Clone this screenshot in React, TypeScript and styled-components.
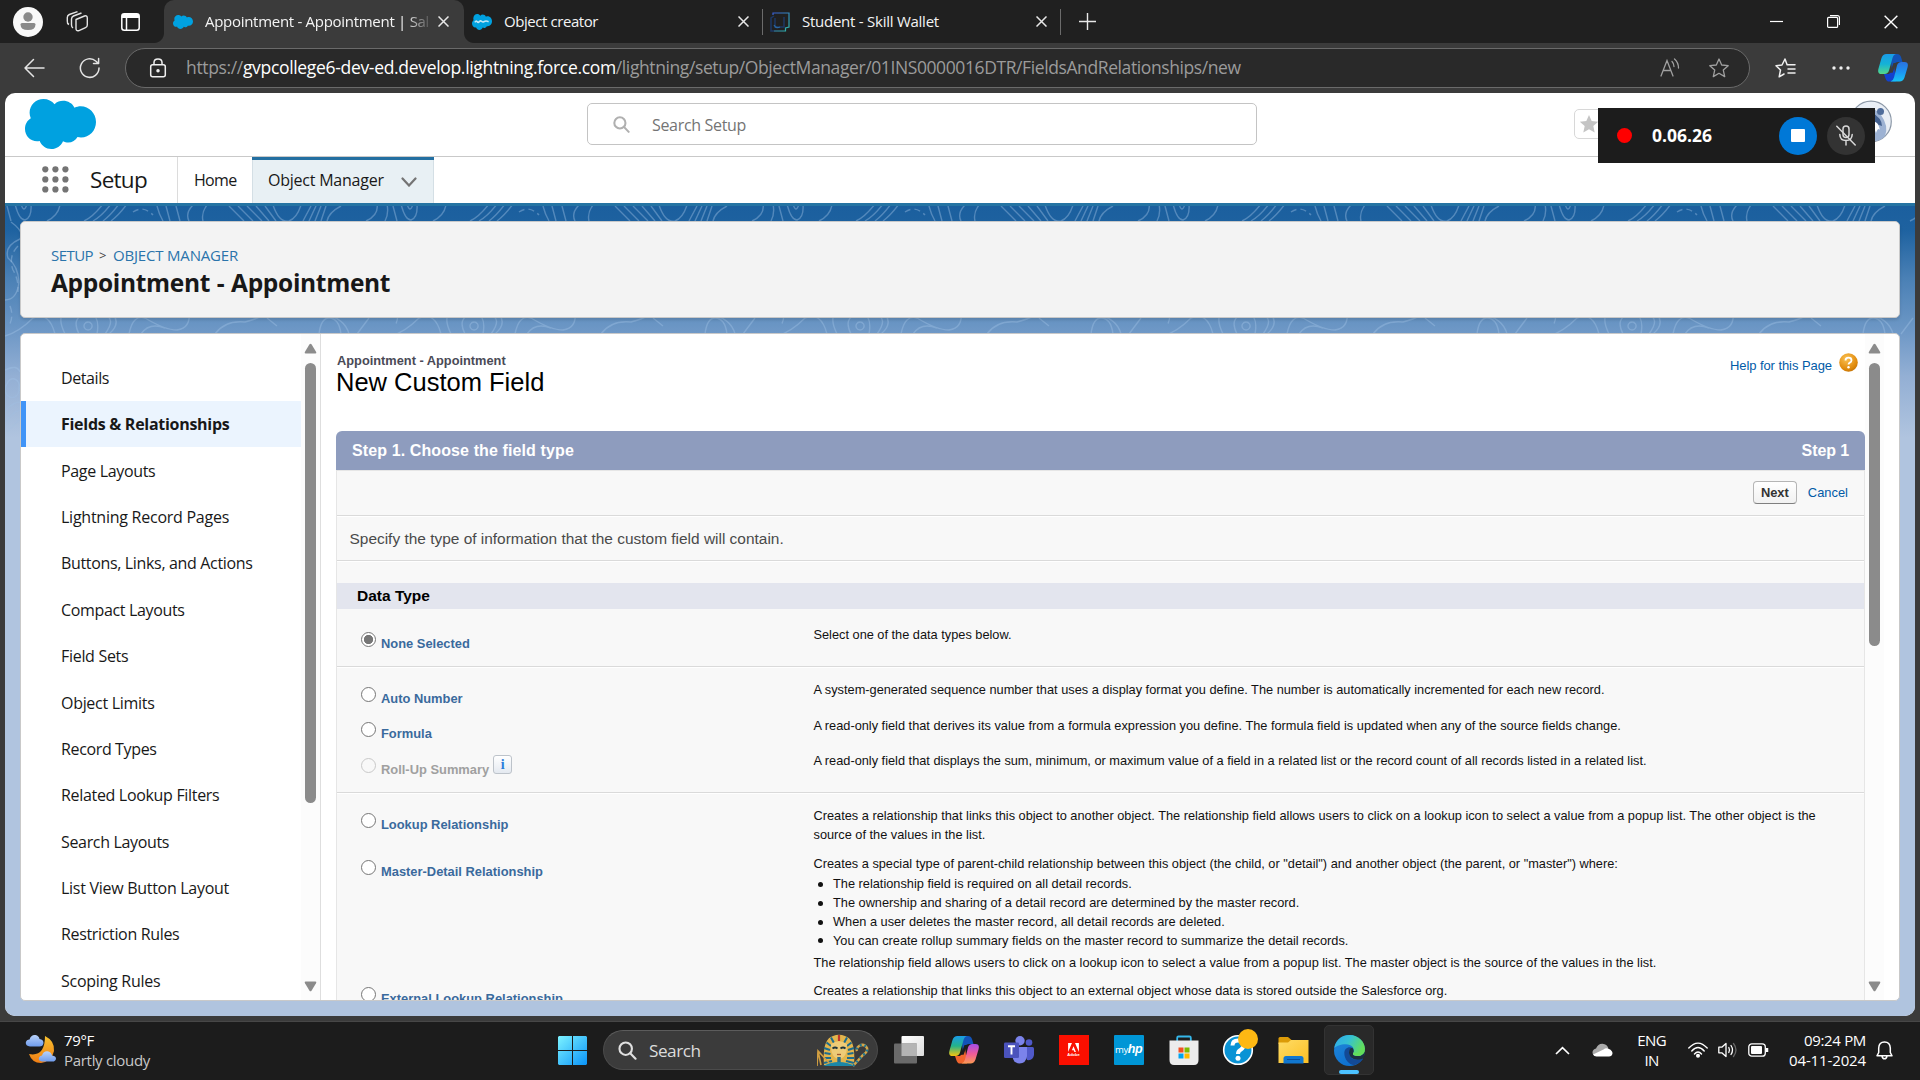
import React from 'react';
import styled, { createGlobalStyle, css } from 'styled-components';

const UI = '"Segoe UI", "Open Sans", "Noto Sans", sans-serif';
const CLASSIC = 'Arial, "Liberation Sans", sans-serif';

const GlobalStyle = createGlobalStyle`
  * { box-sizing: border-box; }
  body { margin: 0; background: #3b3b3b; font-family: ${UI}; overflow: hidden; }
  ul { margin: 0; padding: 0; list-style: none; }
  svg { display: block; flex: none; }
`;

const Screen = styled.div`
  width: 1920px;
  height: 1080px;
  display: flex;
  flex-direction: column;
  background: #3b3b3b;
  overflow: hidden;
`;

/* ---------- Browser chrome ---------- */

const TabStrip = styled.div`
  height: 43px;
  flex: none;
  display: flex;
  align-items: center;
  background: #202020;
  padding-left: 13px;
`;

const Avatar = styled.div`
  width: 30px;
  height: 30px;
  border-radius: 50%;
  background: #f9f9f9;
  display: grid;
  place-items: center;
  margin-right: 23px;
`;

const StripIcon = styled.div<{ $gap: number }>`
  margin-right: ${p => p.$gap}px;
`;

const Tab = styled.div<{ $width: number; $active?: boolean; $divider?: boolean; $pad: number }>`
  position: relative;
  width: ${p => p.$width}px;
  height: ${p => (p.$active ? 43 : 26)}px;
  display: flex;
  align-items: center;
  padding: 0 ${p => (p.$active ? 15 : 13)}px 0 ${p => p.$pad}px;
  ${p => p.$divider && css`border-right: 1px solid #6b6b6b;`}
  ${p =>
    p.$active &&
    css`
      background: #3b3b3b;
      border-radius: 10px 10px 0 0;
      &::before,
      &::after {
        content: '';
        position: absolute;
        bottom: 0;
        width: 10px;
        height: 10px;
      }
      &::before {
        left: -10px;
        background: radial-gradient(circle at 0 0, #202020 9.5px, #3b3b3b 10.5px);
      }
      &::after {
        right: -10px;
        background: radial-gradient(circle at 100% 0, #202020 9.5px, #3b3b3b 10.5px);
      }
    `}
`;

const TabTitle = styled.div<{ $ls: number; $fade?: boolean }>`
  flex: 1;
  min-width: 0;
  margin-left: 12px;
  overflow: hidden;
  white-space: nowrap;
  font-size: 15px;
  line-height: 22px;
  padding-bottom: 2px;
  letter-spacing: ${p => p.$ls}px;
  color: #f4f4f4;
  ${p => p.$fade && css`mask-image: linear-gradient(to right, #000 200px, transparent 228px);`}
`;

const NewTab = styled.div`
  margin-left: 18px;
`;

const WindowControls = styled.div`
  margin-left: auto;
  display: flex;
  align-items: center;
  gap: 44px;
  padding-right: 22px;
`;

const Toolbar = styled.div`
  height: 50px;
  flex: none;
  display: flex;
  align-items: center;
  padding: 0 12px 0 23px;
  background: #3b3b3b;
`;

const ReloadSlot = styled.div`
  margin-left: 34px;
`;

const AddressBar = styled.div`
  width: 1625px;
  height: 40px;
  flex: none;
  margin: 0 25px 0 24px;
  border: 1px solid #6a6a6a;
  border-radius: 20px;
  background: #292929;
  display: flex;
  align-items: center;
  padding: 0 20px 0 23px;
`;

const Url = styled.div`
  flex: 1;
  margin: 0 0 2px 19px;
  display: flex;
  font-size: 17.5px;
  line-height: 26px;
  color: #9b9b9b;
  white-space: nowrap;
`;

const UrlPart = styled.span<{ $ls: number; $host?: boolean }>`
  letter-spacing: ${p => p.$ls}px;
  ${p => p.$host && css`color: #fff;`}
`;

const AddressIcons = styled.div`
  display: flex;
  gap: 29px;
`;

const MoreDots = styled.svg`
  margin: 0 28px 0 36px;
`;

/* ---------- Salesforce page ---------- */

const Page = styled.div`
  width: 1910px;
  height: 923px;
  margin: 0 0 0 5px;
  flex: none;
  border-radius: 10px;
  overflow: hidden;
  background: #fff;
  display: flex;
  flex-direction: column;
`;

const GlobalHeader = styled.header`
  height: 64px;
  flex: none;
  display: flex;
  align-items: flex-start;
  border-bottom: 1px solid #c9c9c9;
  padding: 5px 23px 0 20px;
`;

const LogoSlot = styled.div`
  padding-top: 1px;
`;

const SearchBox = styled.div`
  width: 670px;
  height: 42px;
  margin: 5px 0 0 491px;
  border: 1px solid #c4c4c4;
  border-radius: 5px;
  display: flex;
  align-items: center;
  gap: 22px;
  padding-left: 25px;
  font-size: 16px;
  letter-spacing: -0.32px;
  color: #747474;
`;

const SearchHint = styled.span`
  padding-top: 2px;
`;

const FavoriteButton = styled.div`
  width: 40px;
  height: 30px;
  margin: 11px 0 0 317px;
  border: 1px solid #d8d8d8;
  border-radius: 5px;
  display: flex;
  align-items: center;
  padding-left: 4px;
`;

const UserAvatar = styled.div`
  margin: 2px 0 0 auto;
`;

const RecorderBar = styled.div`
  position: absolute;
  left: 1598px;
  top: 108px;
  width: 277px;
  height: 55px;
  background: #1c1c1c;
  display: flex;
  align-items: center;
  padding: 0 10px 0 19px;
`;

const RecordDot = styled.div`
  width: 15px;
  height: 15px;
  border-radius: 50%;
  background: #f00;
`;

const RecordTime = styled.div`
  flex: 1;
  margin-left: 20px;
  padding-bottom: 2px;
  font-size: 17.5px;
  font-weight: 700;
  color: #fff;
`;

const RoundButton = styled.div<{ $color: string }>`
  width: 38px;
  height: 38px;
  border-radius: 50%;
  margin-left: 10px;
  background: ${p => p.$color};
  display: grid;
  place-items: center;
`;

const StopSquare = styled.div`
  width: 14px;
  height: 13px;
  border-radius: 1px;
  background: #fff;
`;

const NavBar = styled.nav`
  height: 46px;
  flex: none;
  display: flex;
  padding-left: 37px;
`;

const WaffleSlot = styled.div`
  width: 48px;
  padding-top: 9px;
`;

const AppName = styled.div`
  width: 88px;
  border-right: 1px solid #dcdcdc;
  font-size: 22.5px;
  line-height: 46px;
  letter-spacing: -0.71px;
  color: #181818;
`;

const NavItem = styled.div<{ $active?: boolean; $ls: number; $width: number }>`
  width: ${p => p.$width}px;
  padding: 0 17px 0 16px;
  font-size: 16px;
  line-height: 47px;
  letter-spacing: ${p => p.$ls}px;
  color: #181818;
  display: flex;
  justify-content: space-between;
  ${p =>
    p.$active &&
    css`
      background: #e8f0f4;
      box-shadow: inset 0 3px 0 #236fa1, inset 1px 0 0 #d4dfe5, inset -1px 0 0 #d4dfe5;
    `}
  svg { margin-top: 20px; }
`;

const Canvas = styled.main`
  position: relative;
  flex: 1;
  padding: 16px 15px 16px;
  border-top: 3px solid #2574a3;
  background: linear-gradient(to bottom, #1b5f9e 0, #1e62a0 24px, #4a80b5 72px, #6e98c6 125px, #93afd4 170px, #b0c4df 232px);
  display: flex;
  flex-direction: column;
`;

const Pattern = styled.svg`
  position: absolute;
  left: 0;
  top: 0;
`;

const PageHeader = styled.section`
  position: relative;
  height: 97px;
  margin-top: -1px;
  flex: none;
  border: 1px solid #c9c9c9;
  border-radius: 5px;
  background: #f3f3f3;
  box-shadow: 0 2px 3px rgba(0, 0, 0, 0.12);
  padding: 22px 30px 0;
`;

const Crumbs = styled.div`
  display: flex;
  font-size: 15px;
  line-height: 23px;
  color: #2a74ab;
  white-space: pre;
`;

const Crumb = styled.span<{ $ls: number; $width: number; $plain?: boolean }>`
  width: ${p => p.$width}px;
  letter-spacing: ${p => p.$ls}px;
  ${p => p.$plain && css`color: #444; font-size: 13px;`}
`;

const ObjectTitle = styled.h1`
  margin: 0;
  font-size: 24.5px;
  line-height: 32px;
  letter-spacing: -0.31px;
  word-spacing: 0.6px;
  font-weight: 700;
  color: #181818;
`;

const Workspace = styled.section`
  position: relative;
  height: 668px;
  margin-top: 15px;
  flex: none;
  border: 1px solid #c9c9c9;
  border-radius: 5px;
  background: #fff;
  display: flex;
  overflow: hidden;
`;

const SideMenu = styled.ul`
  width: 280px;
  flex: none;
  padding-top: 21px;
`;

const SideItem = styled.li<{ $selected?: boolean; $ls: number }>`
  height: 46.36px;
  padding-left: 40px;
  font-size: 16px;
  line-height: 47px;
  letter-spacing: ${p => p.$ls}px;
  color: #181818;
  white-space: nowrap;
  ${p =>
    p.$selected &&
    css`
      font-weight: 700;
      background: #ebf4fe;
      border-bottom: 1px solid #fff;
      box-shadow: inset 5px 0 0 #4094f7;
    `}
`;

const Scrollbar = styled.div<{ $width: number }>`
  width: ${p => p.$width}px;
  flex: none;
  background: #fcfcfc;
  display: flex;
  flex-direction: column;
  align-items: center;
  padding: 9px 0 8px;
`;

const Thumb = styled.div<{ $height: number }>`
  width: 11px;
  height: ${p => p.$height}px;
  margin: 9px 0 auto;
  border-radius: 6px;
  background: #8b8b8b;
`;

const Setup = styled.div`
  width: 1545px;
  flex: none;
  border-left: 1px solid #dedede;
  padding-left: 15px;
  font-family: ${CLASSIC};
  overflow: hidden;
`;

const SetupHead = styled.div`
  height: 97px;
  display: flex;
  justify-content: space-between;
`;

const EntityName = styled.div`
  padding-top: 18px;
  margin-left: 1px;
  font-size: 12.8px;
  line-height: 18px;
  font-weight: 700;
  color: #4a4a56;
`;

const SetupTitle = styled.h2`
  margin: -2px 0 0 -1px;
  font-size: 25.5px;
  line-height: 28px;
  font-weight: 400;
  color: #000;
`;

const HelpLink = styled.a`
  display: flex;
  gap: 7px;
  padding: 20px 7px 0 0;
  font-size: 13px;
  letter-spacing: -0.07px;
  line-height: 24px;
  color: #015ba7;
  svg { margin-top: -1px; }
`;

const StepBar = styled.div`
  height: 39px;
  border-radius: 6px 6px 0 0;
  background: #8e9cbe;
  display: flex;
  justify-content: space-between;
  padding: 0 16px 0 16px;
  font-size: 16px;
  line-height: 40px;
  font-weight: 700;
  color: #fff;
`;

const StepText = styled.span<{ $ls: number }>`
  letter-spacing: ${p => p.$ls}px;
`;

const WizardBody = styled.div`
  border: 1px solid #e6e6e6;
  border-width: 1px 1px 0 1px;
  background: #f8f8f8;
`;

const Divided = styled.div<{ $height: number }>`
  height: ${p => p.$height}px;
  border-bottom: 1px solid #dadada;
  box-shadow: 0 1px 0 #fff;
`;

const ButtonRow = styled(Divided)`
  display: flex;
  justify-content: flex-end;
  align-items: center;
  gap: 11px;
  padding: 0 16px 2px 0;
`;

const NextButton = styled.button`
  width: 44px;
  height: 23px;
  padding: 0;
  border: 1px solid #b5b5b5;
  border-bottom-color: #7f7f7f;
  border-radius: 4px;
  background: linear-gradient(#fff, #f1f1f1);
  font: 700 12.9px ${CLASSIC};
  color: #333;
`;

const CancelLink = styled.a`
  font-size: 12.9px;
  color: #015ba7;
`;

const Intro = styled(Divided)`
  padding-left: 12.5px;
  font-size: 15.45px;
  line-height: 45px;
  color: #4a4a4a;
`;

const GroupTitle = styled.div`
  height: 26px;
  margin-top: 22px;
  padding-left: 20px;
  background: #e3e5ee;
  font-size: 15.5px;
  line-height: 25px;
  font-weight: 700;
  color: #000;
`;

const Group = styled(Divided)<{ $top: number }>`
  padding-top: ${p => p.$top}px;
`;

const TypeRow = styled.div<{ $height: number }>`
  height: ${p => p.$height}px;
  display: grid;
  grid-template-columns: 476.5px 1010px;
`;

const Choice = styled.label`
  display: flex;
  align-items: flex-start;
  padding-left: 24px;
`;

const Radio = styled.input`
  appearance: none;
  width: 15px;
  height: 15px;
  margin: 6.5px 5px 0 0;
  border: 1px solid #767676;
  border-radius: 50%;
  background: #fff;
  flex: none;
  &:checked {
    background: radial-gradient(circle, #767676 4.3px, #fff 5px);
  }
  &:disabled {
    border-color: #c9c9c9;
    background: #f8f8f8;
  }
`;

const TypeName = styled.span<{ $disabled?: boolean }>`
  margin-top: 8.5px;
  font-size: 12.9px;
  line-height: 19px;
  font-weight: 700;
  white-space: nowrap;
  color: ${p => (p.$disabled ? '#a0a0a0' : '#3a6a9d')};
`;

const InfoBadge = styled.span`
  width: 19px;
  height: 19px;
  margin: 4px 0 0 4px;
  border: 1px solid #bdc3ca;
  border-radius: 3px;
  background: linear-gradient(#fff, #e4e9f0);
  font: 700 14px/17px "Liberation Serif", serif;
  text-align: center;
  color: #2b7ddb;
`;

const Description = styled.div`
  font-size: 12.78px;
  line-height: 19px;
  color: #111;
`;

const Facts = styled.ul`
  padding: 2.5px 0 2.5px 19.5px;
`;

const Fact = styled.li`
  line-height: 18.8px;
  display: flex;
  align-items: center;
  &::before {
    content: '';
    width: 5px;
    height: 5px;
    margin: 0 10.5px 0 -15.5px;
    border-radius: 50%;
    background: #111;
  }
`;

/* ---------- Taskbar ---------- */

const Taskbar = styled.footer`
  height: 59px;
  margin-top: 5px;
  flex: none;
  border-top: 1px solid #474747;
  background: #1c1c1c;
  display: flex;
  align-items: center;
  padding: 0 27px 2px 25px;
  font-size: 15px;
  color: #fff;
`;

const Weather = styled.div`
  width: 533px;
  display: flex;
  align-items: center;
  gap: 7px;
  svg { margin-top: -2px; }
`;

const Lines = styled.div<{ $align?: string }>`
  display: flex;
  flex-direction: column;
  align-items: ${p => p.$align || 'flex-start'};
  line-height: 20px;
  padding-bottom: 1px;
  white-space: nowrap;
`;

const Line = styled.span<{ $ls: number; $dim?: boolean }>`
  letter-spacing: ${p => p.$ls}px;
  ${p => p.$dim && css`color: #c8c8c8;`}
`;

const SearchPill = styled.div`
  width: 275px;
  height: 40px;
  margin: 0 16px 0 16px;
  border-radius: 20px;
  border: 1px solid #4b4b4b;
  border-top-color: #5c5c5c;
  background: #3b3b3b;
  display: flex;
  align-items: center;
  padding: 0 8px 0 14px;
  font-size: 17.2px;
  letter-spacing: -0.5px;
  color: #dcdcdc;
`;

const PillText = styled.span`
  flex: 1;
  margin-left: 12px;
`;

const Apps = styled.div`
  display: flex;
  align-items: center;
  margin-left: -13px;
`;

const AppSlot = styled.div<{ $active?: boolean }>`
  position: relative;
  width: 55px;
  height: 50px;
  display: grid;
  place-items: center;
  ${p =>
    p.$active &&
    css`
      width: 50px;
      margin-left: 3px;
      border: 1px solid #333;
      border-radius: 5px;
      background: #292929;
      &::after {
        content: '';
        position: absolute;
        bottom: 0;
        width: 20px;
        height: 4px;
        border-radius: 2px;
        background: #4cc2ff;
      }
    `}
`;

const AdobeTile = styled.div`
  width: 30px;
  height: 30px;
  background: #fa0f00;
  display: grid;
  place-items: center;
  align-content: center;
  color: #fff;
  font: 700 4px/5px ${CLASSIC};
`;

const HpTile = styled.div`
  width: 30px;
  height: 30px;
  background: #0096d6;
  border-radius: 1px;
  color: #fff;
  font: 9.5px/29px "Open Sans", sans-serif;
  text-align: center;
  letter-spacing: -0.4px;
  b { font: italic 700 12.5px "Liberation Sans Narrow", "Liberation Sans", sans-serif; letter-spacing: -0.6px; }
`;

const Tray = styled.div`
  margin-left: auto;
  display: flex;
  align-items: center;
`;

const TrayItem = styled.div<{ $right: number }>`
  margin-right: ${p => p.$right}px;
`;

/* ---------- Drawings ---------- */

const SalesCloud = ({ w, h, mark }: { w: number; h: number; mark?: boolean }) => (
  <svg width={w} height={h} viewBox="0 0 71 50" preserveAspectRatio="none">
    <path
      fill="#00a1e0"
      d="M18.500 0 C23 0 27 2 29.500 5.200 C32 2.700 35 1.800 38 1.800 C43 1.800 47.500 4.500 49.500 8.700 C51.500 7.700 53.500 7.200 55.700 7.200 C64 7.200 71 14.200 71 23 C71 31.500 64.500 38.500 56 38.500 C54.800 38.500 53.600 38.300 52.500 38 C50.700 41.500 47 43.500 43.300 43.500 C41.500 43.500 39.500 43 38 42.200 C36 47 31.500 50 26.300 50 C21 50 16.500 46.500 14.700 42 C13.800 42.200 13 42.300 12 42.300 C5.500 42.300 0 36.800 0 30 C0 25.300 2.300 21.500 5.800 19.300 C5 17.500 4.600 15.500 4.600 13.800 C4.600 6.200 10.800 0 18.500 0 Z"
    />
    {mark && <path d="M10 26 q4 -6 8 -2 t8 0 t8 -1 t8 1 t8 -2 t9 2" stroke="#fff" strokeWidth="5" fill="none" opacity=".75" />}
  </svg>
);

const CloseX = ({ size = 11, color = '#e8e8e8', sw = 1.5 }) => (
  <svg width={size} height={size} viewBox="0 0 11 11" fill="none" stroke={color} strokeWidth={sw}>
    <path d="M0.500 0.500 L10.500 10.500 M10.500 0.500 L0.500 10.500" />
  </svg>
);

const SearchGlyph = ({ size, color, sw }: { size: number; color: string; sw: number }) => (
  <svg width={size} height={size} viewBox="0 0 18 18" fill="none" stroke={color} strokeWidth={sw} strokeLinecap="round">
    <circle cx="7.3" cy="7.3" r="5.900" />
    <path d="M11.800 11.800 L16.600 16.800" />
  </svg>
);

const Star = ({ size, ...rest }: { size: number } & React.SVGProps<SVGSVGElement>) => (
  <svg width={size} height={size} viewBox="0 0 20 20" strokeLinejoin="round" {...rest}>
    <path d="M10 1 L12.700 7 L19.200 7.700 L14.300 12.100 L15.700 18.600 L10 15.300 L4.300 18.600 L5.700 12.100 L0.800 7.700 L7.300 7 Z" />
  </svg>
);

const Arrow = ({ down }: { down?: boolean }) => (
  <svg width="13" height="11" viewBox="0 0 13 11" fill="#8b8b8b">
    <path d={down ? 'M1.500 0.500 H11.500 Q13 0.500 12 2.300 L7.500 9.700 Q6.500 11 5.500 9.700 L1 2.300 Q0 0.500 1.500 0.500 Z' : 'M1.500 10.500 H11.500 Q13 10.500 12 8.700 L7.500 1.300 Q6.500 0 5.500 1.300 L1 8.700 Q0 10.500 1.500 10.500 Z'} />
  </svg>
);

const ContourPattern = () => (
  <Pattern width="1910" height="260">
    <defs>
      <pattern id="contours" width="386" height="260" patternUnits="userSpaceOnUse">
        <g fill="none" stroke="#9fc0e4" strokeOpacity=".42" strokeWidth="1.400">
          <path d="M2 0 L6 15 M10 -2 Q14 14 20 14 Q27 12 26 -2 M16 -2 Q19 8 22 -2 M55 -2 Q54 9 42 15" />
          <path d="M79 15 Q88 11 98 -2 M88 15 Q97 10 106 -2 M98 15 Q106 9 114 -2 M106 15 Q114 9 122 -2" />
          <path d="M128 6 Q138 -1 148 9" strokeDasharray="6 4" />
          <path d="M152 0 Q154 8 158 15 M161 0 L165 15 M171 0 L175 15 M188 -1 Q180 7 184 15 M202 -1 Q196 7 198 15" />
          <path d="M224 0 L239 15 M233 0 L248 15 M242 0 L257 15 M251 0 L264 15 M260 0 L271 15 M268 -1 Q274 17 284 15 Q292 12 296 -1" />
          <path d="M298 15 L306 0 M304 15 L311 0 M310 15 L316 0 M316 15 L321 0 M322 15 Q324 6 336 0" />
          <path d="M361 15 Q374 9 372 -2 M380 15 Q384 8 382 -2" />
          <path d="M6 16 Q20 26 15 33 Q-1 40 3 52 Q13 60 14 76 Q12 94 0 94" />
          <path d="M13 40 Q3 50 8 64 Q14 74 13 86 M5 100 Q9 110 4 120" strokeDasharray="7 4" />
          <path d="M0 130 Q14 126 28 112 Q44 105 50 128 M60 128 Q50 108 64 104 M74 128 Q66 112 80 108 Q96 106 92 128 M83 116 a4 4 0 1 0 .1 0 M98 108 Q112 112 100 128 M104 128 Q116 118 108 108" />
          <path d="M124 128 Q128 108 140 112 Q160 124 172 124 Q186 122 184 106 M136 128 Q144 116 160 122 M210 128 Q220 114 240 116 Q262 110 264 104" />
          <path d="M262 112 L272 120 M284 106 Q300 114 318 108 Q340 112 344 128 M314 128 Q316 112 324 112 Q334 112 336 128 M352 128 L364 112" />
          <path d="M0 164 Q12 158 15 166 M2 178 a7 8 0 1 0 12 4 a6 7 0 1 0 -12 -4 M0 205 Q8 196 15 196 M0 216 Q8 206 15 204 M2 226 L15 213" />
        </g>
      </pattern>
      <linearGradient id="fade" x1="0" y1="0" x2="0" y2="1">
        <stop offset="0.700" stopColor="#fff" />
        <stop offset="1" stopColor="#000" />
      </linearGradient>
      <mask id="fademask">
        <rect width="1910" height="250" fill="url(#fade)" />
      </mask>
    </defs>
    <rect width="1910" height="250" fill="url(#contours)" mask="url(#fademask)" />
  </Pattern>
);

const CopilotIcon = ({ vivid, size }: { vivid?: boolean; size: number }) => {
  const id = vivid ? 'cv' : 'cb';
  return (
    <svg width={size} height={size * 0.92} viewBox="0 0 30 27.600">
      <defs>
        <linearGradient id={id + '1'} x1="0" y1="0" x2="0" y2="1">
          <stop offset="0" stopColor="#1a9be8" />
          <stop offset=".5" stopColor={vivid ? '#23b38a' : '#14b2d6'} />
          <stop offset="1" stopColor={vivid ? '#f6c60e' : '#54d88a'} />
        </linearGradient>
        <linearGradient id={id + '2'} x1="0" y1="0" x2="0" y2="1">
          <stop offset="0" stopColor={vivid ? '#a24de8' : '#2a72e0'} />
          <stop offset=".5" stopColor={vivid ? '#ee5a9a' : '#1d93f2'} />
          <stop offset="1" stopColor={vivid ? '#fb9b52' : '#18c4f4'} />
        </linearGradient>
      </defs>
      <path d="M12 0 H19 Q22 0 23 3 L24.500 8 H20 Q17 8 16 11 L14 16 Z" fill="#1253b8" />
      <path d="M18 27.600 H11 Q8.500 27.600 7.500 24.500 L6 20 H11 Q13 19 14 16 L16 11 Z" fill={vivid ? '#f0642d' : '#1242cf'} />
      <path d="M8.500 0 H18 Q15.500 0.500 14.500 4 L11 16.500 Q10 20 6.500 20 H3.500 Q-1 20 0.500 14.500 L3.500 4 Q4.800 0 8.500 0 Z" fill={`url(#${id}1)`} />
      <path d="M21.500 27.600 H12.500 Q15 27 16 23.500 L19 11.500 Q20 8 23.500 8 H26.500 Q31 8 29.500 13.500 L26.500 23.500 Q25.200 27.600 21.500 27.600 Z" fill={`url(#${id}2)`} />
      <path d="M15.500 9 L18.300 9 L14.600 18.800 L11.800 18.800 Z" fill={vivid ? '#1c1c1c' : '#3b3b3b'} />
    </svg>
  );
};

const Pharaoh = () => (
  <svg width="52" height="33" viewBox="0 0 52 33">
    <path d="M7 31 Q5 5 16 2 Q22 -0.500 28 2 Q39 5 37 31 Z" fill="#e3b54c" />
    <g stroke="#1c6d90" strokeWidth="2" fill="none">
      <path d="M7 14 L13 16 M7.500 19 L13.500 20 M7 24 L14 24 M7 29 L15 27 M37 14 L31 16 M36.500 19 L30.500 20 M37 24 L30 24 M37 29 L29 27 M9.500 8.500 L14 12 M34.500 8.500 L30 12 M14 3.500 L17 9 M30 3.500 L27 9" />
    </g>
    <path d="M14 10 Q22 4.500 30 10 L29.500 18 Q27 25 22 25 Q17 25 14.500 18 Z" fill="#eecb77" />
    <path d="M15.500 14.500 q2.500 -2 5 0 M23.500 14.500 q2.500 -2 5 0" stroke="#20353d" strokeWidth="1.700" fill="none" />
    <path d="M20 20.500 h4" stroke="#a0542c" strokeWidth="1.300" />
    <path d="M22 1 v6" stroke="#c2352b" strokeWidth="2.200" />
    <path d="M20.300 23 h3.400 v8 h-3.400 z" fill="#2a6e8c" />
    <path d="M0 32 L1 17 L14 31 M1 17 L4 31" stroke="#d29f41" strokeWidth="1.600" fill="none" />
    <path d="M6 32 Q22 24 38 32 Z" fill="#1b87a8" />
    <path d="M36 32 L46 21 Q51 18 50 14 Q47 9 42 12 Q39 14 40 17" stroke="#d6a548" strokeWidth="2.400" fill="none" />
    <path d="M36 32 L46 21 Q51 18 50 14 Q47 9 42 12 Q39 14 40 17" stroke="#1f7692" strokeWidth="2.400" strokeDasharray="2 3" fill="none" />
  </svg>
);

const EdgeIcon = () => (
  <svg width="31" height="31" viewBox="0 0 30 30">
    <defs>
      <linearGradient id="e1" x1="0" y1="0" x2="1" y2=".4">
        <stop offset="0" stopColor="#2fa7ea" />
        <stop offset=".5" stopColor="#35c1d3" />
        <stop offset="1" stopColor="#63de5b" />
      </linearGradient>
      <linearGradient id="e2" x1="0" y1="0" x2=".6" y2="1">
        <stop offset="0" stopColor="#2389d8" />
        <stop offset="1" stopColor="#0c6fd0" />
      </linearGradient>
    </defs>
    <circle cx="15" cy="15" r="15" fill="url(#e2)" />
    <path d="M0.300 12.500 C2 4 8 0 15 0 C24 0 30 7 30 13.500 C30 18.500 26 20.500 22.500 20.300 C19 20.200 17.500 19 18.800 17 C20.500 13 17 9 11.500 9 C6 9 2 11 0.300 12.500 Z" fill="url(#e1)" />
    <path d="M10 17 C9.500 24 16 30 20 29 C24 28 27 25 28.500 22.500 C24 25.500 15 25 14.500 17 C14.500 14.500 16 13 17 12 C13 11 10.300 13.500 10 17 Z" fill="#134a96" />
    <path d="M18.800 17 C17.500 19 19 20.200 22.500 20.300 C26 20.500 29.500 18.500 30 14 C30.300 17.500 29.500 20.500 28.500 22.500 C22 26 14.500 23 14.500 17 C14.500 14 16.500 12 18 12.500 C19.300 14 19.300 15.800 18.800 17 Z" fill="#202428" opacity=".85" />
    <path d="M18.800 17 C17.500 19 19 20.200 22.500 20.300 C26 20.500 30 18.500 30 13.500 C29 17 24 18 18.800 17 Z" fill="#63de5b" />
  </svg>
);

/* ---------- Data ---------- */

const menu: { name: string; ls: number; selected?: boolean }[] = [
  { name: 'Details', ls: -0.41 },
  { name: 'Fields & Relationships', ls: -0.28, selected: true },
  { name: 'Page Layouts', ls: -0.34 },
  { name: 'Lightning Record Pages', ls: -0.25 },
  { name: 'Buttons, Links, and Actions', ls: -0.34 },
  { name: 'Compact Layouts', ls: -0.34 },
  { name: 'Field Sets', ls: -0.3 },
  { name: 'Object Limits', ls: -0.3 },
  { name: 'Record Types', ls: -0.36 },
  { name: 'Related Lookup Filters', ls: -0.32 },
  { name: 'Search Layouts', ls: -0.34 },
  { name: 'List View Button Layout', ls: -0.285 },
  { name: 'Restriction Rules', ls: -0.34 },
  { name: 'Scoping Rules', ls: -0.28 },
];

interface FieldType {
  name: string;
  text: string;
  height: number;
  checked?: boolean;
  disabled?: boolean;
  facts?: string[];
  after?: string;
}

const groups: { top: number; height: number; rows: FieldType[] }[] = [
  {
    top: 16,
    height: 58,
    rows: [{ name: 'None Selected', text: 'Select one of the data types below.', height: 35, checked: true }],
  },
  {
    top: 13,
    height: 126,
    rows: [
      {
        name: 'Auto Number',
        text: 'A system-generated sequence number that uses a display format you define. The number is automatically incremented for each new record.',
        height: 35.6,
      },
      {
        name: 'Formula',
        text: 'A read-only field that derives its value from a formula expression you define. The formula field is updated when any of the source fields change.',
        height: 35.6,
      },
      {
        name: 'Roll-Up Summary',
        text: 'A read-only field that displays the sum, minimum, or maximum value of a field in a related list or the record count of all records listed in a related list.',
        height: 35,
        disabled: true,
      },
    ],
  },
  {
    top: 13,
    height: 300,
    rows: [
      {
        name: 'Lookup Relationship',
        text: 'Creates a relationship that links this object to another object. The relationship field allows users to click on a lookup icon to select a value from a popup list. The other object is the source of the values in the list.',
        height: 47.7,
      },
      {
        name: 'Master-Detail Relationship',
        text: 'Creates a special type of parent-child relationship between this object (the child, or "detail") and another object (the parent, or "master") where:',
        height: 127.3,
        facts: [
          'The relationship field is required on all detail records.',
          'The ownership and sharing of a detail record are determined by the master record.',
          'When a user deletes the master record, all detail records are deleted.',
          'You can create rollup summary fields on the master record to summarize the detail records.',
        ],
        after:
          'The relationship field allows users to click on a lookup icon to select a value from a popup list. The master object is the source of the values in the list.',
      },
      {
        name: 'External Lookup Relationship',
        text: 'Creates a relationship that links this object to an external object whose data is stored outside the Salesforce org.',
        height: 40,
      },
    ],
  },
];

/* ---------- Sections ---------- */

const BrowserTabs = () => (
  <TabStrip>
    <Avatar>
      <svg width="16" height="20" viewBox="0 0 16 20" fill="#8a8a8a">
        <circle cx="8" cy="5" r="4.700" />
        <path d="M2 11 H14 Q15.500 11 15.500 12.500 Q15.500 18 8 18 Q0.500 18 0.500 12.500 Q0.500 11 2 11 Z" />
      </svg>
    </Avatar>
    <StripIcon $gap={32}>
      <svg width="23" height="21" viewBox="0 0 23 21" fill="none" stroke="#e4e4e4" strokeWidth="1.400" strokeLinejoin="round">
        <path d="M10 8.500 L18.500 5 Q21.300 4.200 21.300 7 V14 Q21.300 16 19.500 16.600 L13 19.600 Q10 20.500 10 17.500 Z" />
        <path d="M7 17 Q5.500 16 5.500 14 V8 Q5.500 6 7.500 5 L15.500 2" />
        <path d="M3 13.500 Q1 12.500 1.300 10 V6.500 Q1.300 4.500 3.300 3.500 L11.500 0.700" />
      </svg>
    </StripIcon>
    <StripIcon $gap={24}>
      <svg width="19" height="18" viewBox="0 0 19 18" fill="none" stroke="#fff" strokeWidth="1.500">
        <rect x=".8" y=".8" width="17.400" height="16.400" rx="2.500" />
        <path d="M1 3 H18" strokeWidth="4" />
        <path d="M5.500 4 V17" />
      </svg>
    </StripIcon>
    <Tab $width={300} $active $pad={9}>
      <SalesCloud w={20} h={14} />
      <TabTitle $ls={-0.29} $fade>Appointment - Appointment | Sal</TabTitle>
      <CloseX />
    </Tab>
    <Tab $width={299} $divider $pad={8}>
      <SalesCloud w={20} h={16} mark />
      <TabTitle $ls={-0.43}>Object creator</TabTitle>
      <CloseX />
    </Tab>
    <Tab $width={298} $divider $pad={7}>
      <svg width="20" height="20" viewBox="0 0 20 20" fill="none">
        <defs>
          <linearGradient id="sw" x1="0" y1="0" x2="1" y2="1">
            <stop offset="0" stopColor="#3a5fd6" />
            <stop offset="1" stopColor="#2fb7a6" />
          </linearGradient>
        </defs>
        <path d="M3 3 V1 H19 V15 L15.500 16 V19 H4" stroke="url(#sw)" strokeWidth="1.200" />
        <path d="M4 4 L1 6 V19 H4 M5 6 V15 H14 V5" stroke="#1d3763" strokeWidth="1.500" />
        <path d="M4 13 Q6 17 10 15" stroke="#2a66a0" strokeWidth="1.300" />
      </svg>
      <TabTitle $ls={-0.25}>Student - Skill Wallet</TabTitle>
      <CloseX />
    </Tab>
    <NewTab>
      <svg width="17" height="17" viewBox="0 0 17 17" stroke="#e8e8e8" strokeWidth="1.400">
        <path d="M8.500 0 V17 M0 8.500 H17" />
      </svg>
    </NewTab>
    <WindowControls>
      <svg width="13" height="13" viewBox="0 0 13 13" stroke="#fff" strokeWidth="1.200"><path d="M0 6.500 H13" /></svg>
      <svg width="13" height="13" viewBox="0 0 13 13" fill="none" stroke="#fff" strokeWidth="1.200">
        <rect x=".6" y="2.400" width="10" height="10" rx="1" />
        <path d="M3 .6 H10.500 Q12.400 .6 12.400 2.500 V10" />
      </svg>
      <CloseX size={14} color="#fff" sw={1.1} />
    </WindowControls>
  </TabStrip>
);

const BrowserToolbar = () => (
  <Toolbar>
    <svg width="22" height="20" viewBox="0 0 22 20" fill="none" stroke="#e4e4e4" strokeWidth="1.500" strokeLinecap="round" strokeLinejoin="round">
      <path d="M21 10 H2 M10.500 1.500 L2 10 L10.500 18.500" />
    </svg>
    <ReloadSlot>
      <svg width="22" height="22" viewBox="0 0 22 22" fill="none" stroke="#e4e4e4" strokeWidth="1.500" strokeLinecap="round" strokeLinejoin="round">
        <path d="M20 11 A9.300 9.300 0 1 1 17 4.200 L19.500 6.500 M19.600 1.500 V6.500 H14.500" />
      </svg>
    </ReloadSlot>
    <AddressBar>
      <svg width="18" height="20" viewBox="0 0 18 20" fill="none" stroke="#f0f0f0" strokeWidth="1.500">
        <rect x="1.700" y="6.800" width="14.600" height="12" rx="2" />
        <path d="M5 6.500 V4.500 Q5 1 9 1 Q13 1 13 4.500 V6.500" />
        <circle cx="9" cy="12.800" r="1" fill="#f0f0f0" />
      </svg>
      <Url>
        <UrlPart $ls={-0.35}>https://</UrlPart>
        <UrlPart $ls={-0.32} $host>gvpcollege6-dev-ed.develop.lightning.force.com</UrlPart>
        <UrlPart $ls={-0.4}>/lightning/setup/ObjectManager/01INS0000016DTR/FieldsAndRelationships/new</UrlPart>
      </Url>
      <AddressIcons>
        <svg width="20" height="20" viewBox="0 0 20 20" fill="none" stroke="#a0a0a0" strokeWidth="1.300" strokeLinecap="round">
          <path d="M1 18 L7 2.500 L13 18 M3.200 12.500 H10.800 M12 3.500 Q14 5.500 14 8.500 M14.500 1 Q18.500 4.500 18.500 10" />
        </svg>
        <Star size={20} fill="none" stroke="#a0a0a0" strokeWidth="1.300" />
      </AddressIcons>
    </AddressBar>
    <svg width="21" height="20" viewBox="0 0 21 20" fill="none" stroke="#f0f0f0" strokeWidth="1.500" strokeLinejoin="round" strokeLinecap="round">
      <path d="M12 6.500 L10 1 L7 7 L1 7.700 L5.500 12 L4.200 18.800 L9 16 M12 6.800 H20 M13 11 H20 M13 15 H20" />
    </svg>
    <MoreDots viewBox="0 0 18 4" width="18" height="4" fill="#f0f0f0">
      <circle cx="2" cy="2" r="1.700" /><circle cx="9" cy="2" r="1.700" /><circle cx="16" cy="2" r="1.700" />
    </MoreDots>
    <CopilotIcon size={30} />
  </Toolbar>
);

const FieldRow = ({ row }: { row: FieldType }) => (
  <TypeRow $height={row.height}>
    <Choice>
      <Radio type="radio" name="fieldType" defaultChecked={row.checked} disabled={row.disabled} />
      <TypeName $disabled={row.disabled}>{row.name}</TypeName>
      {row.disabled && <InfoBadge>i</InfoBadge>}
    </Choice>
    <Description>
      {row.text}
      {row.facts && (
        <Facts>
          {row.facts.map(f => (
            <Fact key={f}>{f}</Fact>
          ))}
        </Facts>
      )}
      {row.after}
    </Description>
  </TypeRow>
);

const FieldWizard = () => (
  <Setup>
    <SetupHead>
      <EntityName>
        Appointment - Appointment
        <SetupTitle>New Custom Field</SetupTitle>
      </EntityName>
      <HelpLink>
        Help for this Page
        <svg width="19" height="20" viewBox="0 0 19 20">
          <defs>
            <radialGradient id="help" cx=".4" cy=".3" r=".8">
              <stop offset="0" stopColor="#fbc254" />
              <stop offset=".7" stopColor="#e08a0c" />
              <stop offset="1" stopColor="#b96a05" />
            </radialGradient>
          </defs>
          <circle cx="9.500" cy="9.500" r="9.300" fill="url(#help)" />
          <path d="M6.500 7.500 Q6.500 4.700 9.500 4.700 Q12.500 4.700 12.500 7.200 Q12.500 8.800 10.800 9.600 Q9.500 10.300 9.500 11.500" fill="none" stroke="#fff" strokeWidth="1.800" />
          <circle cx="9.500" cy="14.200" r="1.200" fill="#fff" />
        </svg>
      </HelpLink>
    </SetupHead>
    <StepBar>
      <StepText $ls={0.11}>Step 1. Choose the field type</StepText>
      <StepText $ls={-0.1}>Step 1</StepText>
    </StepBar>
    <WizardBody>
      <ButtonRow $height={45}>
        <NextButton>Next</NextButton>
        <CancelLink>Cancel</CancelLink>
      </ButtonRow>
      <Intro $height={45}>Specify the type of information that the custom field will contain.</Intro>
      <GroupTitle>Data Type</GroupTitle>
      {groups.map(g => (
        <Group key={g.height} $height={g.height} $top={g.top}>
          {g.rows.map(r => (
            <FieldRow key={r.name} row={r} />
          ))}
        </Group>
      ))}
    </WizardBody>
  </Setup>
);

const SalesforcePage = () => (
  <Page>
    <GlobalHeader>
      <LogoSlot>
        <SalesCloud w={71} h={50} />
      </LogoSlot>
      <SearchBox>
        <SearchGlyph size={17} color="#b0b0b0" sw={2.2} />
        <SearchHint>Search Setup</SearchHint>
      </SearchBox>
      <FavoriteButton>
        <Star size={20} fill="#c4c4c4" />
      </FavoriteButton>
      <UserAvatar>
        <svg width="42" height="43" viewBox="0 0 42 43">
          <circle cx="21" cy="21.500" r="20.300" fill="#e9eef5" stroke="#8d99a8" strokeWidth="1.200" />
          <path d="M12 14 Q20 2 31 15 Q39 26 35 36 Q31 41 24 41 L22 20 Z" fill="#9db2d3" />
          <circle cx="30.500" cy="11.500" r="3.500" fill="#4f6c9a" />
          <path d="M21 12 Q32 18 32 26 L26 24 Z" fill="#44618f" />
          <path d="M22 22 Q28 20 30 30 Q28 27 26 33 Z" fill="#fff" />
        </svg>
      </UserAvatar>
    </GlobalHeader>
    <NavBar>
      <WaffleSlot>
        <svg width="27" height="27" viewBox="0 0 27 27" fill="#747474">
          {[3.3, 13.4, 23.4].map(x => [3.3, 13.4, 23.4].map(y => <circle key={x + '-' + y} cx={x} cy={y} r="3.100" />))}
        </svg>
      </WaffleSlot>
      <AppName>Setup</AppName>
      <NavItem $ls={-0.68} $width={74}>Home</NavItem>
      <NavItem $ls={-0.23} $width={182} $active>
        Object Manager
        <svg width="16" height="10" viewBox="0 0 16 10" fill="none" stroke="#747474" strokeWidth="2.200" strokeLinecap="round">
          <path d="M1.500 1.500 L8 8.500 L14.500 1.500" />
        </svg>
      </NavItem>
    </NavBar>
    <Canvas>
      <ContourPattern />
      <PageHeader>
        <Crumbs>
          <Crumb $ls={-0.55} $width={48}>SETUP</Crumb>
          <Crumb $ls={0} $width={14} $plain>{'>'}</Crumb>
          <Crumb $ls={-0.185} $width={140}>OBJECT MANAGER</Crumb>
        </Crumbs>
        <ObjectTitle>Appointment - Appointment</ObjectTitle>
      </PageHeader>
      <Workspace>
        <SideMenu>
          {menu.map(m => (
            <SideItem key={m.name} $ls={m.ls} $selected={m.selected}>{m.name}</SideItem>
          ))}
        </SideMenu>
        <Scrollbar $width={19}>
          <Arrow />
          <Thumb $height={440} />
          <Arrow down />
        </Scrollbar>
        <FieldWizard />
        <Scrollbar $width={19}>
          <Arrow />
          <Thumb $height={283} />
          <Arrow down />
        </Scrollbar>
      </Workspace>
    </Canvas>
  </Page>
);

const ScreenRecorder = () => (
  <RecorderBar>
    <RecordDot />
    <RecordTime>0.06.26</RecordTime>
    <RoundButton $color="#0078d7"><StopSquare /></RoundButton>
    <RoundButton $color="#333">
      <svg width="20" height="21" viewBox="0 0 20 21" fill="none" stroke="#d8d8d8" strokeWidth="1.500" strokeLinecap="round">
        <rect x="7" y="1" width="6" height="11.500" rx="3" />
        <path d="M3.800 9.500 Q4 15.500 10 15.500 Q16 15.500 16.200 9.500 M10 15.500 V20 M0.800 1.200 L19.200 20" />
      </svg>
    </RoundButton>
  </RecorderBar>
);

const WindowsTaskbar = () => (
  <Taskbar>
    <Weather>
      <svg width="32" height="30" viewBox="0 0 32 30">
        <defs>
          <linearGradient id="moon" x1="0" y1="0" x2="0" y2="1"><stop offset="0" stopColor="#f8c12f" /><stop offset="1" stopColor="#ef7d14" /></linearGradient>
          <linearGradient id="cl" x1="0" y1="0" x2="0" y2="1"><stop offset="0" stopColor="#b9d2fa" /><stop offset="1" stopColor="#6f9cec" /></linearGradient>
        </defs>
        <path d="M20 2 Q30 7 29 17 Q27 27 16 29 Q7 29 4 20 Q20 23 20 2 Z" fill="url(#moon)" />
        <path d="M5 12.500 Q0.500 12 0.800 8.500 Q1.500 5.500 4.500 5.500 Q6 0.500 10.500 1 Q14 1.800 14.500 5 Q18.500 5.500 18.500 9 Q18 12.500 14.500 12.500 Z" fill="url(#cl)" />
        <path d="M17 27.500 Q13.500 27 13.800 24 Q14.500 21.500 17 21.500 Q18.500 17 22.500 17.300 Q26.500 18 27 21.500 Q31 22 31 24.700 Q30.500 27.500 27.500 27.500 Z" fill="url(#cl)" />
      </svg>
      <Lines>
        <Line $ls={-0.33}>79°F</Line>
        <Line $ls={-0.3} $dim>Partly cloudy</Line>
      </Lines>
    </Weather>
    <svg width="29" height="29" viewBox="0 0 29 29">
      <defs>
        <linearGradient id="win" gradientUnits="userSpaceOnUse" x1="0" y1="0" x2="29" y2="29"><stop offset="0" stopColor="#7df3ff" /><stop offset="1" stopColor="#0a93f8" /></linearGradient>
      </defs>
      <path fill="url(#win)" d="M1 0 H14 V14 H0 V1 Z M15 0 H28 L29 1 V14 H15 Z M0 15 H14 V29 H1 L0 28 Z M15 15 H29 V28 L28 29 H15 Z" />
    </svg>
    <SearchPill>
      <SearchGlyph size={19} color="#e0e0e0" sw={2} />
      <PillText>Search</PillText>
      <Pharaoh />
    </SearchPill>
    <Apps>
      <AppSlot>
        <svg width="30" height="28" viewBox="0 0 30 28">
          <defs>
            <linearGradient id="tv" x1="0" y1="0" x2="1" y2="1"><stop offset="0" stopColor="#fff" /><stop offset="1" stopColor="#dcdcdc" /></linearGradient>
          </defs>
          <rect x="7.500" y="0" width="22.500" height="20" rx="1" fill="url(#tv)" />
          <rect x="0" y="7.500" width="23" height="20" rx="1" fill="#6a6a6a" />
          <rect x="7.500" y="7.500" width="15.500" height="12.500" fill="#b4b4b4" />
        </svg>
      </AppSlot>
      <AppSlot><CopilotIcon vivid size={30} /></AppSlot>
      <AppSlot>
        <svg width="30" height="28" viewBox="0 0 30 28">
          <circle cx="25" cy="6.500" r="3.300" fill="#5059c9" />
          <path d="M19 11 H28.500 Q30 11 30 12.500 V19 Q29 25 23 24 Z" fill="#5059c9" />
          <circle cx="16" cy="4.700" r="4.700" fill="#7b83eb" />
          <path d="M8 11 H23 V20 Q22 27.500 15.500 27.500 Q9.500 27 8.500 21 Z" fill="#7b83eb" />
          <rect x="0" y="6.500" width="15" height="15.500" rx="1.300" fill="#4b53bc" />
          <path d="M4 10.300 H11 M7.500 10.300 V18.500" stroke="#fff" strokeWidth="1.900" />
        </svg>
      </AppSlot>
      <AppSlot>
        <AdobeTile>
          <svg width="11" height="9" viewBox="0 0 12 10" fill="#fff"><path d="M0 0 H4.300 L0 10 Z M7.700 0 H12 V10 Z M6 3.500 L8.700 10 H7 L6.200 8 H4.200 Z" /></svg>
          Adobe
        </AdobeTile>
      </AppSlot>
      <AppSlot><HpTile>my<b>hp</b></HpTile></AppSlot>
      <AppSlot>
        <svg width="30" height="30" viewBox="0 0 30 30">
          <path d="M8.200 7 V2.700 Q8.200 1.500 9.500 1.500 H20.500 Q21.800 1.500 21.800 2.700 V7" stroke="#35b7ea" strokeWidth="1.800" fill="none" />
          <path d="M0.500 5.500 H29.500 V25 Q29.500 30 25 30 H5 Q0.500 30 0.500 25 Z" fill="#ececec" />
          <path d="M9.500 12.500 H14.500 V17.500 H9.500 Z" fill="#f25022" /><path d="M15.500 12.500 H20.500 V17.500 H15.500 Z" fill="#7fba00" />
          <path d="M9.500 18.500 H14.500 V23.500 H9.500 Z" fill="#00a4ef" /><path d="M15.500 18.500 H20.500 V23.500 H15.500 Z" fill="#ffb900" />
        </svg>
      </AppSlot>
      <AppSlot>
        <svg width="38" height="42" viewBox="0 0 38 42">
          <circle cx="18" cy="21" r="14.300" fill="#0a93d5" stroke="#fff" strokeWidth="1.600" />
          <path d="M12.500 16.500 Q12.500 11.500 18 11.500 Q23.500 11.500 23.500 16 Q23.500 19 21 20.500 Q18 22 18 25" fill="none" stroke="#fff" strokeWidth="4" />
          <circle cx="18" cy="29.300" r="2.500" fill="#fff" />
          <circle cx="28" cy="10" r="10" fill="#fdb813" />
        </svg>
      </AppSlot>
      <AppSlot>
        <svg width="31" height="28" viewBox="0 0 31 28">
          <defs><linearGradient id="fo" x1="0" y1="0" x2="1" y2="1"><stop offset="0" stopColor="#ffdc66" /><stop offset="1" stopColor="#fbbf24" /></linearGradient></defs>
          <path d="M0.500 2.500 Q0.500 1 2 1 H10 L13.500 4 V8 H0.500 Z" fill="#dc9b08" />
          <path d="M0.500 6.500 H10 L13 4 H30.500 V27 H0.500 Z" fill="url(#fo)" />
          <path d="M5.500 27.500 V22.500 Q5.500 20 8 20 H23 Q25.500 20 25.500 22.500 V27.500 Z" fill="#1177cf" />
          <path d="M9 23.500 H22" stroke="#0b4f9a" strokeWidth="1" />
        </svg>
      </AppSlot>
      <AppSlot $active><EdgeIcon /></AppSlot>
    </Apps>
    <Tray>
      <TrayItem $right={22}>
        <svg width="15" height="9" viewBox="0 0 15 9" fill="none" stroke="#fff" strokeWidth="1.700"><path d="M1 8 L7.500 1.700 L14 8" /></svg>
      </TrayItem>
      <TrayItem $right={24}>
        <svg width="21" height="14" viewBox="0 0 21 14">
          <path d="M4 13 Q0.300 12.500 0.500 9 Q1 6 4 5.500 Q6 0.500 10.500 0.700 Q15 1 16.500 5.500 L10 9 Z" fill="#a9a9a9" />
          <path d="M4.500 13.500 Q2 13.300 1 11.500 L11.500 6.500 Q14 4.500 17 6 Q20.500 7.500 20.500 10.500 Q20 13.500 17 13.500 Z" fill="#fff" />
        </svg>
      </TrayItem>
      <TrayItem $right={22}>
        <Lines $align="center">
          <Line $ls={-0.6}>ENG</Line>
          <Line $ls={-0.5}>IN</Line>
        </Lines>
      </TrayItem>
      <TrayItem $right={10}>
        <svg width="20" height="16" viewBox="0 0 20 16" fill="none" stroke="#fff" strokeWidth="1.400" strokeLinecap="round">
          <path d="M0.800 6 Q10 -3.800 19.200 6 M3.800 9 Q10 2 16.200 9 M6.500 12 Q10 8 13.500 12" /><circle cx="10" cy="13.800" r="1.300" fill="#fff" />
        </svg>
      </TrayItem>
      <TrayItem $right={10}>
        <svg width="20" height="18" viewBox="0 0 20 18" fill="none" stroke="#fff" strokeWidth="1.300" strokeLinejoin="round" strokeLinecap="round">
          <path d="M0.800 6.200 H3.800 L8 2.500 V15.500 L3.800 11.800 H0.800 Z M10.800 6.500 Q12.200 9 10.800 11.500 M13 4.500 Q16 9 13 13.500" /><path d="M15.500 2.500 Q20.500 9 15.500 15.500" stroke="#666" />
        </svg>
      </TrayItem>
      <TrayItem $right={20}>
        <svg width="21" height="14" viewBox="0 0 21 14" fill="none" stroke="#fff" strokeWidth="1.300">
          <rect x=".8" y=".8" width="16.500" height="12.400" rx="3" /><rect x="3" y="3" width="11" height="8" rx="1" fill="#fff" stroke="none" /><path d="M19 5 V9" strokeWidth="2.500" />
        </svg>
      </TrayItem>
      <TrayItem $right={10}>
        <Lines $align="flex-end">
          <Line $ls={-0.33}>09:24 PM</Line>
          <Line $ls={-0.13}>04-11-2024</Line>
        </Lines>
      </TrayItem>
      <svg width="17" height="19" viewBox="0 0 17 19" fill="none" stroke="#fff" strokeWidth="1.500" strokeLinejoin="round">
        <path d="M1 14.800 L2.700 11.500 V7 Q3 1 8.500 1 Q14 1 14.300 7 V11.500 L16 14.800 Z M6 15 Q6.500 17.800 8.500 17.800 Q10.500 17.800 11 15" />
      </svg>
    </Tray>
  </Taskbar>
);

export default function App() {
  return (
    <>
      <GlobalStyle />
      <Screen>
        <BrowserTabs />
        <BrowserToolbar />
        <SalesforcePage />
        <WindowsTaskbar />
        <ScreenRecorder />
      </Screen>
    </>
  );
}
